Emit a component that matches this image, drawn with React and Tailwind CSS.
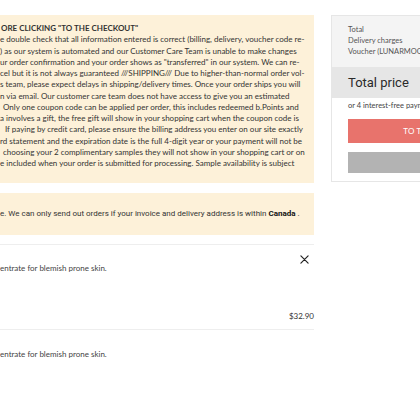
import React from "react";

const lines = [
  { t: 'ORE CLICKING "TO THE CHECKOUT"', b: true, x: 1 },
  { t: "e double check that all information entered is correct (billing, delivery, voucher code re-" },
  { t: ") as our system is automated and our Customer Care Team is unable to make changes" },
  { t: 'ur order confirmation and your order shows as "transferred" in our system. We can re-' },
  { t: "cel but it is not always guaranteed ///SHIPPING/// Due to higher-than-normal order vol-" },
  { t: "s team, please expect delays in shipping/delivery times. Once your order ships you will" },
  { t: "n via email. Our customer care team does not have access to give you an estimated" },
  { t: "Only one coupon code can be applied per order, this includes redeemed b.Points and", x: 3 },
  { t: "a involves a gift, the free gift will show in your shopping cart when the coupon code is" },
  { t: "If paying by credit card, please ensure the billing address you enter on our site exactly", x: 5 },
  { t: "rd statement and the expiration date is the full 4-digit year or your payment will not be" },
  { t: "choosing your 2 complimentary samples they will not show in your shopping cart or on", x: 3 },
  { t: "e included when your order is submitted for processing. Sample availability is subject" },
];

function XIcon() {
  return (
    <svg width="9" height="9" viewBox="0 0 10 10" fill="none" stroke="#222" strokeWidth="1.3" strokeLinecap="round">
      <path d="M1 1 L9 9 M9 1 L1 9" />
    </svg>
  );
}

export default function App() {
  return (
    <div className="w-[420px] h-[420px] overflow-hidden bg-white">
      <div className="flex w-[560px] pt-[15px] gap-[17px]">
        {/* Left column */}
        <div className="w-[314px] flex-none">
          <div className="bg-[#fdf1d9] h-[168px] pt-[8px] pr-[9px] text-[#333] font-['Lato',sans-serif] text-[8px] leading-[11.25px]">
            {lines.map((l, i) => (
              <div
                key={i}
                className={`whitespace-nowrap overflow-hidden ${l.b ? "font-bold" : ""}`}
                style={{ paddingLeft: l.x || 0 }}
              >
                {l.t}
              </div>
            ))}
          </div>
          <div className="mt-[10px] bg-[#fdf1d9] h-[42px] flex items-center text-[8px] text-[#333] font-['Roboto',sans-serif] whitespace-nowrap">
            <span>
              e. We can only send out orders if your invoice and delivery address is within <span className="font-bold text-[#111]">Canada</span> .
            </span>
          </div>
          <div className="mt-[9px] border-t border-[#eeeeee]" />
          <div className="h-[84px] flex flex-col font-['Lato',sans-serif]">
            <div className="flex justify-end pt-[10px] pr-[5px]">
              <XIcon />
            </div>
            <div className="text-[8px] text-[#444] leading-[10px] -mt-[1px]">entrate for blemish prone skin.</div>
            <div className="mt-[37px] flex justify-end text-[8px] text-[#333]">$32.90</div>
          </div>
          <div className="border-t border-[#eeeeee]" />
          <div className="pt-[19px] text-[8px] text-[#444] leading-[10px] font-['Lato',sans-serif]">entrate for blemish prone skin.</div>
        </div>

        {/* Right panel */}
        <div className="w-[221px] flex-none border border-[#e6e6e6] h-[167px] font-['Lato',sans-serif]">
          <div className="bg-[#f4f4f4] h-[51px] pl-[16px] pt-[8px] text-[7.5px] leading-[11px] text-[#555]">
            <div>Total</div>
            <div>Delivery charges</div>
            <div>Voucher (LUNARMOON)</div>
          </div>
          <div className="bg-[#e6e6e6] h-[31px] pl-[16px] flex items-center text-[13px] text-[#2a2a2a] font-normal font-['Roboto',sans-serif]">
            Total price
          </div>
          <div className="pl-[16px] pt-[3px] text-[7.5px] text-[#444] leading-[10px] whitespace-nowrap">or 4 interest-free payments</div>
          <div className="mx-[16px] mt-[8px] h-[24px] bg-[#e8736c] flex items-center justify-center text-white text-[8px] tracking-wide">
            TO THE CHECKOUT
          </div>
          <div className="mx-[16px] mt-[9px] h-[21px] bg-[#b3b3b3]" />
        </div>
      </div>
    </div>
  );
}
